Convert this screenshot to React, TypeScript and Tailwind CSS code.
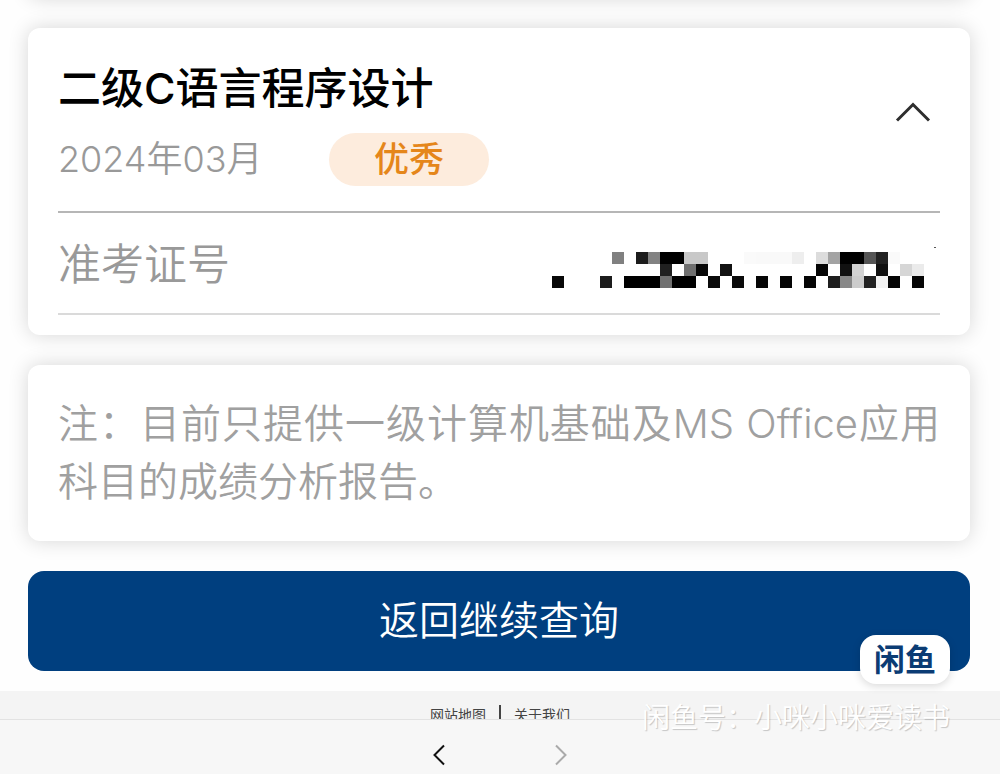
import { useState } from "react"

// one entry per filled cell: [column, row, colour]
const maskCells: [number, number, string][] = [
    [5, 0, "#808080"], [7, 0, "#1c1c1c"], [8, 0, "#828282"], [9, 0, "#000"], [10, 0, "#000"],
    [11, 0, "#c8c8c8"], [12, 0, "#c8c8c8"], [16, 0, "#fafafa"], [17, 0, "#f9f9f9"], [18, 0, "#f9f9f9"],
    [19, 0, "#f9f9f9"], [20, 0, "#eeeeee"], [22, 0, "#dcdcdc"], [23, 0, "#a3a3a3"], [24, 0, "#000"],
    [25, 0, "#000"], [26, 0, "#555"], [27, 0, "#222"], [28, 0, "#fafafa"],
    [9, 1, "#202020"], [11, 1, "#707070"], [12, 1, "#080808"], [14, 1, "#121212"], [22, 1, "#050505"],
    [24, 1, "#111"], [25, 1, "#d2d2d2"], [27, 1, "#111"], [29, 1, "#d6d6d6"], [30, 1, "#ebebeb"],
    [0, 2, "#080808"], [4, 2, "#1c1c1c"], [6, 2, "#000"], [7, 2, "#000"], [8, 2, "#000"],
    [9, 2, "#707070"], [10, 2, "#000"], [11, 2, "#000"], [13, 2, "#0a0a0a"], [15, 2, "#0a0a0a"],
    [17, 2, "#050505"], [19, 2, "#050505"], [21, 2, "#050505"], [23, 2, "#1e1e1e"], [24, 2, "#888"],
    [25, 2, "#cccccc"], [26, 2, "#222"], [27, 2, "#f2f2f2"], [28, 2, "#050505"], [30, 2, "#050505"],
]

const cardStyle = "rounded-xl bg-white px-[30px] shadow-[0_0_20px_rgba(0,0,0,0.16)]"

function MaskedNumber() {
    return (
        <svg width="388" height="50" viewBox="0 0 388 50" shapeRendering="crispEdges" role="img" aria-label="准考证号">
            {maskCells.map(([col, row, fill]) => (
                <rect key={`${col}-${row}`} x={col * 12} y={row * 12 + 13} width="12" height="12" fill={fill} />
            ))}
            <rect x="382" y="8" width="2" height="1" fill="#555" />
        </svg>
    )
}

function ResultCard() {
    const [open, setOpen] = useState(true)

    return (
        <section className={cardStyle + " pt-[30px] pb-5"}>
            <div className="flex items-center justify-between pb-[25px]">
                <div>
                    <h1 className="text-[43px] leading-[60px] font-medium text-black">二级C语言程序设计</h1>
                    <div className="mt-[15px] flex items-center">
                        <div className="w-[271px] text-[36px] leading-[53px] font-[350] text-[#999]">2024年03月</div>
                        <div className="w-40 rounded-full bg-[#fdecdd] text-center text-[35px] leading-[53px] font-medium text-[#e5861a]">优秀</div>
                    </div>
                </div>
                <button onClick={() => setOpen(!open)} aria-label="展开" aria-expanded={open} className="cursor-pointer pr-2 pb-5">
                    <svg className={open ? "" : "rotate-180"} width="38" height="22" viewBox="0 0 38 22" fill="none" stroke="#2e2e2e" strokeWidth="3">
                        <path d="M3 19.500 19 3.500 35 19.500" />
                    </svg>
                </button>
            </div>
            {open && (
                <div className="flex items-center justify-between border-t-2 border-b-2 border-t-[#b6b6b6] border-b-[#dadada] pt-[2px]">
                    <div className="text-[43px] leading-[98px] font-[350] text-[#999]">准考证号</div>
                    <MaskedNumber />
                </div>
            )}
        </section>
    )
}

export default function App() {
    return (
        <div className="relative flex min-h-screen flex-col overflow-hidden bg-[#fefefe] font-[Inter,'Noto_Sans_CJK_SC',sans-serif]">
            <main className="flex flex-col gap-[30px] pr-[30px] pb-5 pl-7">
                <div className={cardStyle + " -mt-[42px] h-10"} />
                <ResultCard />
                <section className={cardStyle + " py-[30px]"}>
                    <p className="text-justify text-[40px] leading-[58px] font-[350] text-[#a0a0a0]">
                        注：目前只提供一级计算机基础及MS Office应用科目的成绩分析报告。
                    </p>
                </section>
                <div className="relative">
                    <button className="w-full cursor-pointer rounded-2xl bg-[#003f7f] text-[40px] leading-[100px] font-[350] text-white">
                        返回继续查询
                    </button>
                    <div className="absolute right-5 -bottom-[13px] rounded-2xl bg-white px-[14px] text-[31px] leading-[49px] font-bold text-[#0b3c74] shadow-[0_2px_8px_rgba(0,0,0,0.15)]">
                        闲鱼
                    </div>
                </div>
            </main>

            <footer className="flex h-7 items-start justify-center gap-[13px] overflow-hidden bg-[#f4f4f4] pt-[14px] text-[14px] leading-5 text-[#444]">
                <a href="#map">网站地图</a>
                <span className="h-5 w-[2px] bg-[#444]" />
                <a href="#about">关于我们</a>
            </footer>

            <nav className="flex grow items-center justify-center gap-[106px] border-t border-[#e2e2e2] bg-[#f7f7f7] pt-[23px] pb-[7px]">
                <button aria-label="后退" className="cursor-pointer">
                    <svg width="16" height="24" viewBox="0 0 16 24" fill="none" stroke="#111" strokeWidth="2">
                        <path d="M13 2.500 3.500 12 13 21.500" />
                    </svg>
                </button>
                <button aria-label="前进" className="cursor-pointer">
                    <svg width="16" height="24" viewBox="0 0 16 24" fill="none" stroke="#aaa" strokeWidth="2">
                        <path d="M3 2.500 12.500 12 3 21.500" />
                    </svg>
                </button>
            </nav>

            <div className="pointer-events-none absolute right-[50px] bottom-9 text-[28px] leading-10 font-[350] text-white [text-shadow:1px_1px_1px_rgba(0,0,0,0.2)]">
                闲鱼号：小咪小咪爱读书
            </div>
        </div>
    )
}
